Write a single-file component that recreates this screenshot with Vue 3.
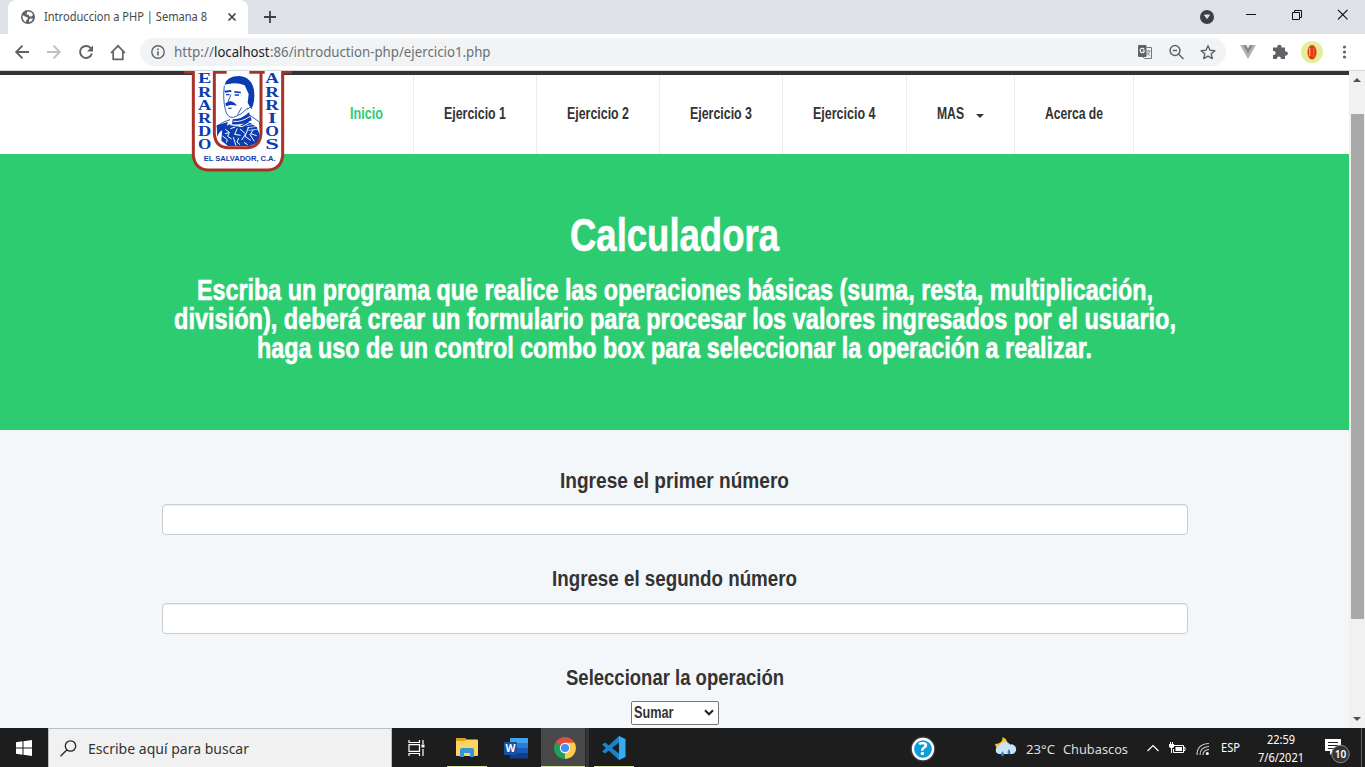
<script setup>
import { h, ref } from 'vue'

// Single line of real text, set to a fixed measure (condensed or expanded).
const Fit = (p) =>
  h('svg', { width: p.w, height: p.h || 20, class: 'fit' }, [
    h('text', { x: 0, y: p.b || 15, 'font-size': p.s || 14, textLength: p.w, lengthAdjust: 'spacingAndGlyphs', fill: 'currentColor' }, p.t)
  ])
Fit.props = ['t', 'w', 's', 'b', 'h']

const nav = [
  { t: 'Inicio', w: 33, on: true },
  { t: 'Ejercicio 1', w: 62 },
  { t: 'Ejercicio 2', w: 62 },
  { t: 'Ejercicio 3', w: 62 },
  { t: 'Ejercicio 4', w: 62.5 },
  { t: 'MAS', w: 27, caret: true },
  { t: 'Acerca de', w: 58 }
]
const lines = [
  { t: 'Escriba un programa que realice las operaciones básicas (suma, resta, multiplicación,', w: 956 },
  { t: 'división), deberá crear un formulario para procesar los valores ingresados por el usuario,', w: 1002 },
  { t: 'haga uso de un control combo box para seleccionar la operación a realizar.', w: 835 }
]
const leftLetters = ['E', 'R', 'A', 'R', 'D', 'O']
const rightLetters = ['A', 'R', 'R', 'I', 'O', 'S']
const first = ref('')
const second = ref('')
</script>

<template>
  <div class="screen">
    <header class="tabs">
      <div class="tab">
        <svg class="globe" width="14" height="14" viewBox="0 0 14 14"><circle cx="7" cy="7" r="7" fill="#5f6368"/><path d="M1.500 5.500Q3 5.300 4 6.500L6.500 7.300 6.800 9 5.200 10.200 5 12.200Q1.400 10.500 1.500 5.500ZM6.500 1.600Q10.500 1.500 12 4.700L10.800 6.400 8.300 6.300 7.600 4.700 5.600 4.600 5.800 3ZM9 8.500L12 8.700Q11 11.500 8.300 12.200L8 10Z" fill="#fff"/></svg>
        <Fit class="title" t="Introduccion a PHP | Semana 8" :w="163" :s="12.2" :b="14"/>
        <svg class="x" width="8" height="8" viewBox="0 0 8 8"><path d="M.5.5l7 7M7.5.5l-7 7" stroke="#3c4043" stroke-width="1.6"/></svg>
      </div>
      <svg class="plus" width="12" height="12" viewBox="0 0 12 12"><path d="M6 0v12M0 6h12" stroke="#3c4043" stroke-width="1.8"/></svg>
      <svg class="winctl" width="150" height="20" viewBox="0 0 150 20">
        <circle cx="8" cy="11" r="7" fill="#3c4043"/><path d="M5.500 9h5l-2.500 3.500Z" fill="#dee1e6" stroke="#dee1e6"/>
        <g fill="none" stroke="#111"><path d="M47 8.500h10M93.500 6.500h7v7h-7ZM95.500 6.500v-2h7v7h-2"/><path d="M139 3.800l9.500 9.500M148.500 3.800l-9.500 9.500" stroke-width="1.200"/></g>
      </svg>
    </header>

    <div class="toolbar">
      <svg class="navi" width="114" height="18" viewBox="0 0 114 18" fill="none" stroke="#5f6368" stroke-width="1.900">
        <path d="M15 9H2.500M8.500 2.700L2.200 9l6.300 6.300"/>
        <path d="M33 9h12M39.500 2.700L45.800 9l-6.300 6.300" stroke="#bdc1c6"/>
        <path d="M77 5.500A6 6 0 1 0 77.900 10.500"/><path d="M79 2.500v6h-6Z" fill="#5f6368" stroke="none"/>
        <path d="M97 10L104 2.800l7 7.200M99.200 8.500v7.900h9.600V8.500" stroke-width="1.700"/>
      </svg>
      <div class="omni">
        <svg width="14" height="14" viewBox="0 0 14 14"><circle cx="7" cy="7" r="6.200" fill="none" stroke="#5f6368" stroke-width="1.400"/><path d="M7 6.200v4.200M7 3.400v1.600" stroke="#5f6368" stroke-width="1.600"/></svg>
        <div class="url"><Fit t="http://" :w="40" :s="13.6"/><Fit class="host" t="localhost" :w="55.500" :s="13.6"/><Fit t=":86/introduction-php/ejercicio1.php" :w="220.500" :s="13.6"/></div>
        <svg class="acts" width="80" height="18" viewBox="0 0 80 18">
          <rect x="1" y="2" width="8.500" height="12" rx="1" fill="#5f6368"/><path d="M9.500 4.500h5v11H7.500L6 14" fill="none" stroke="#777"/>
          <path d="M7.300 6.500A2.200 2.200 0 1 0 7.500 8H5.500" fill="none" stroke="#fff" stroke-width="1.100"/><path d="M9.500 8h4M11.500 7v1M12.800 8q-.7 3-3 4.600M10 9.300q1.300 2.400 3.300 3.500" fill="none" stroke="#888" stroke-width=".9"/>
          <g fill="none" stroke="#5f6368" stroke-width="1.500"><circle cx="38" cy="7.500" r="4.900"/><path d="M41.500 11l5 5M35.800 7.500h4.400"/><path d="M71 2.700l2 4.500 4.900.4-3.700 3.200 1.100 4.800-4.300-2.500-4.300 2.500 1.100-4.800-3.700-3.200 4.900-.4Z" stroke-linejoin="round" stroke-width="1.400"/></g>
        </svg>
      </div>
      <svg class="exts" width="120" height="26" viewBox="0 0 120 26">
        <path d="M0 6h16L8 20Z" fill="#b4b4b4"/><path d="M3.200 6h9.600L8 14.500Z" fill="#858585"/><path d="M6 6h4L8 9.500Z" fill="#eee"/>
        <path d="M33 8.500h4.300a2.200 2.200 0 1 1 4.200 0H45v3.900a2.200 2.200 0 1 1 0 4.200v3.400h-4.200a2 2 0 1 0-3.800 0h-4v-4.200a2 2 0 1 0 0-3.800Z" fill="#5f6368"/>
        <circle cx="72" cy="13" r="11" fill="#e5ec9a"/><ellipse cx="72" cy="13.300" rx="4.500" ry="7.200" fill="#e33a12"/><path d="M69.800 9v8" stroke="#ffc9a0"/><path d="M73.700 9v9" stroke="#f9813e" stroke-width=".8"/>
        <g fill="#5f6368"><circle cx="104.500" cy="8" r="1.600"/><circle cx="104.500" cy="13" r="1.600"/><circle cx="104.500" cy="18" r="1.600"/></g>
      </svg>
    </div>

    <div class="viewport">
      <main class="page">
        <nav class="menu">
          <a v-for="n in nav" :key="n.t" :class="{ on: n.on }"><Fit class="cond" :t="n.t" :w="n.w" :s="17" :b="15"/><i v-if="n.caret" class="caret"></i></a>
          <svg class="crest" width="108" height="102" viewBox="42 15 324 306">
            <path d="M70 15H338V272Q334 311 296 312H112Q74 311 70 272Z" fill="#fff"/>
            <path d="M42 19H70V268Q74 309 114 312H294Q334 309 338 268V19H365M129 19H170M238 19H284" fill="none" stroke="#a93226" stroke-width="9"/>
            <g fill="#0b3db0">
              <path d="M164 56Q170 30 208 30Q245 34 252 72Q256 108 244 130L233 110 236 84 224 58Q198 46 164 56Z"/>
              <path d="M163 74l20-2 2 5-20 3zM193 75l19 2 1 5-20-2zM168 84h11v4h-11zM194 85h13v4h-13zM166 112l15-7 12 5 8 9q-11-3-20-2l-13 4zM174 125h12l-3 4-8-1z"/>
              <path d="M188 160q28 0 49-21l8 24q-30 16-59 12zM140 178l34-10-6 18q-22 9-26 27zM157 188l21-13 31 5 25-14 27 18 9 26-8 20-22 10h-66l-20-16z"/>
            </g>
            <path d="M163 59q-5 40 3 72 6 26 25 23 23-6 42-28M183 86l-10 24M234 107q14-8 7 16l-10 8M215 124l-12 22M140 181q16-13 40-20M240 148l28 20 3 24" fill="none" stroke="#0b3db0" stroke-width="2.500"/>
            <g fill="none" stroke="#fff" stroke-width="3">
              <path d="M190 166q25 3 50-15M180 176l36 6 34-19M166 190l12 9-5 12 12 8M202 187l-8 18 18 3M210 189l17 15-12 18M236 183l-11 28 17 12M250 191l-8 12 18 6M158 210l14 11-3 9M190 214l8 25M206 216l-5 12 9 8M239 204l14 22M181 188l15-5M165 203l12-3M222 229l11 7"/><path d="M229 179l34-6M231 186l34-6M235 193l33-4" stroke-width="2"/>
            </g>
            <path d="M133 19V203Q136 244 173 245H233Q270 243 273 203V19" fill="none" stroke="#a93226" stroke-width="9"/>
            <g class="crest-letters" fill="#0b3db0">
              <text v-for="(c, i) in leftLetters" :key="'l' + i" x="84" :y="52 + i * 39.500" textLength="40" lengthAdjust="spacingAndGlyphs">{{ c }}</text>
              <text v-for="(c, i) in rightLetters" :key="'r' + i" :x="c === 'I' ? 294 : 286" :y="52 + i * 39.500" :textLength="c === 'I' ? 25 : 41" lengthAdjust="spacingAndGlyphs">{{ c }}</text>
              <text class="country" x="101" y="284" textLength="216" lengthAdjust="spacingAndGlyphs">EL SALVADOR, C.A.</text>
            </g>
          </svg>
        </nav>

        <section class="hero">
          <h1><Fit class="cond" t="Calculadora" :w="209" :s="47" :b="42" :h="50"/></h1>
          <p><Fit v-for="l in lines" :key="l.w" class="cond" :t="l.t" :w="l.w" :s="28.6" :b="24" :h="29"/></p>
        </section>

        <form class="form" @submit.prevent>
          <label><Fit class="cond" t="Ingrese el primer número" :w="229" :s="21.5" :b="20" :h="26"/></label>
          <input v-model="first" type="text">
          <label><Fit class="cond" t="Ingrese el segundo número" :w="245" :s="21.5" :b="19" :h="26"/></label>
          <input v-model="second" type="text">
          <label><Fit class="cond" t="Seleccionar la operación" :w="218" :s="21.5" :b="19" :h="26"/></label>
          <div class="select"><Fit class="cond" t="Sumar" :w="39.500" :s="16.5" :b="15"/><svg width="10" height="7" viewBox="0 0 10 7"><path d="M1 1.300l4 4 4-4" fill="none" stroke="#222" stroke-width="2"/></svg></div>
        </form>
      </main>
      <div class="scroll">
        <i class="up"></i><div class="thumb"></div><i class="down"></i>
      </div>
    </div>

    <footer class="taskbar">
      <div class="start"><svg width="16" height="16" viewBox="0 0 16 16" fill="#fff"><path d="M0 2.200L6.500 1.300V7.500H0ZM7.500 1.200L16 0V7.500H7.500ZM0 8.500H6.500V14.700L0 13.800ZM7.500 8.500H16V16L7.500 14.800Z"/></svg></div>
      <div class="search">
        <svg width="17" height="17" viewBox="0 0 17 17" fill="none" stroke="#222" stroke-width="1.300"><circle cx="10.500" cy="6" r="5.200"/><path d="M7 9.800L.5 16.300"/></svg>
        <Fit t="Escribe aquí para buscar" :w="161" :s="14.6" :b="16"/>
      </div>
      <div class="app task"><svg width="18" height="16" viewBox="0 0 18 16" fill="none" stroke="#fff" stroke-width="1.200"><path d="M1 0v2.500h10.500V0M1 16v-2.500h10.500V16M1 4.700h10.500v6.600H1ZM15 0v4M15 9v7"/><path d="M13.500 4.500h3v3h-3Z" fill="#fff" stroke="none"/></svg></div>
      <div class="app folder run"><svg width="22" height="19" viewBox="0 0 22 19"><path d="M0 1q0-1 1-1h8l1.500 1.500H21q1 0 1 1V17q0 1-1 1H1q-1 0-1-1Z" fill="#fcd462"/><path d="M0 1q0-1 1-1h8l1 1.500L8.500 3H0Z" fill="#e1a01b"/><path d="M4 19v-7q0-2 2-2h10q2 0 2 2v7h-4v-4H8v4Z" fill="#3993d8"/></svg></div>
      <div class="app word"><svg width="24" height="22" viewBox="0 0 24 22"><path d="M6 1h18v5H6Z" fill="#41a5ee"/><path d="M6 6h18v5H6Z" fill="#2b7cd3"/><path d="M6 11h18v5H6Z" fill="#185abd"/><path d="M6 16h18v5.500H6Z" fill="#123f8c"/><path d="M0 5h13v13H0Z" fill="#17509f"/><text x="1.500" y="15" font-size="10" font-weight="700" textLength="10" lengthAdjust="spacingAndGlyphs" fill="#fff">W</text></svg></div>
      <div class="app chrome run"><svg width="22" height="22" viewBox="0 0 22 22"><path d="M11 11L1.500 5.500A11 11 0 0 1 20.500 5.500Z" fill="#dd4f43"/><path d="M11 11L20.500 5.500A11 11 0 0 1 11 22Z" fill="#fccd48"/><path d="M11 11V22A11 11 0 0 1 1.500 5.500Z" fill="#1fa15d"/><path d="M11 5.800h9.700l-4.500 8L11 22l4-8.500Z" fill="#fccd48"/><circle cx="11" cy="11" r="5.200" fill="#fff"/><circle cx="11" cy="11" r="4.100" fill="#4c8bf5"/></svg></div>
      <div class="stack"></div>
      <div class="app code run"><svg width="24" height="24" viewBox="0 0 24 24"><path d="M17 0v6.500L3 17.500 0 15.500 16 1Z" fill="#1684ce"/><path d="M17 24v-6.500L3 6.500 0 8.500 16 23Z" fill="#1684ce"/><path d="M17 0l6.500 3v18L17 24Z" fill="#35acf2"/></svg></div>
      <svg class="help" width="24" height="24" viewBox="0 0 24 24"><circle cx="12" cy="12" r="10" fill="#0d9bdb" stroke="#fff" stroke-width="2.300"/><text x="7.500" y="18" font-size="17" font-weight="700" textLength="9" lengthAdjust="spacingAndGlyphs" fill="#fff">?</text></svg>
      <svg class="weather" width="24" height="24" viewBox="0 0 24 24"><path d="M8.500 1q7 3 4 10H2L1 8q8 0 7.500-7Z" fill="#f9c52b"/><path d="M6 18a4 4 0 0 1-.5-8 6 6 0 0 1 10.500-1.500 4.500 4.500 0 0 1 2.500 9.500Z" fill="#c9e4fa"/><path d="M8.500 15q-2.800 4.500 0 5.500 2.800-1 0-5.500M15 13q-2.800 4.500 0 5.500 2.800-1 0-5.500" fill="#2e79c8"/></svg>
      <Fit class="deg" t="23°C" :w="29" :s="13" :b="15.500"/>
      <Fit class="rain" t="Chubascos" :w="65" :s="13" :b="15.500"/>
      <svg class="chev" width="12" height="8" viewBox="0 0 12 8"><path d="M.5 7L6 1.500 11.500 7" fill="none" stroke="#fff" stroke-width="1.200"/></svg>
      <svg class="batt" width="16" height="12" viewBox="0 0 16 12"><path d="M4.500 3.500h10v7h-10V7M14.500 5.500H16v3h-1.500" fill="none" stroke="#fff"/><path d="M6.500 5h6.500v4H6.500ZM0 2h5v3q-.5 1-2 1v5H2V6Q0 6 0 4Z" fill="#fff"/><path d="M1.500 0v2M3.500 0v2" stroke="#fff"/></svg>
      <svg class="wifi" width="14" height="14" viewBox="0 0 14 14" fill="none" stroke="#ccc" stroke-width="1.100"><path d="M1 13Q1 2 13 1.500M4 13Q4 5 13 4.500M7 13Q7 8 13 7.500"/><circle cx="11.300" cy="11.500" r="1.500" fill="#fff" stroke="none"/></svg>
      <Fit class="esp" t="ESP" :w="19" :s="12" :b="14"/>
      <div class="clock"><Fit t="22:59" :w="28" :s="12" :b="13.500" :h="18"/><Fit t="7/6/2021" :w="46" :s="12" :b="14" :h="18"/></div>
      <svg class="note" width="26" height="26" viewBox="0 0 26 26"><path d="M0 1h16v12H9l-4 4v-4H0Z" fill="#fff"/><path d="M3 4.500h10M3 7.500h10M3 10.500h6" stroke="#222"/><circle cx="15.500" cy="16" r="8.700" fill="#343434" stroke="#8a8a8a"/><text x="9.800" y="20" font-size="11" font-weight="600" textLength="11.500" lengthAdjust="spacingAndGlyphs" fill="#fff">10</text></svg>
      <div class="peek"></div>
    </footer>
  </div>
</template>

<style>
html, body { margin: 0; overflow: hidden; }
svg { display: block; flex: none; overflow: visible; }
.hero .fit text { stroke: currentColor; stroke-width: .6px; }
</style>

<style scoped>
.screen { width: 1365px; height: 767px; display: flex; flex-direction: column; font-family: "Noto Sans", "Open Sans", sans-serif; overflow: hidden; background: #fff; }
.cond { font-family: "Liberation Sans", Arial, sans-serif; font-weight: 700; }

.tabs { height: 34px; flex: none; background: #dee1e6; display: flex; align-items: flex-start; }
.tab { margin-left: 8px; width: 240px; height: 34px; background: #fff; border-radius: 8px 8px 0 0; display: flex; align-items: center; box-sizing: border-box; padding-left: 13px; }
.title { margin-left: 9px; color: #45494d; }
.x { margin-left: 21px; }
.plus { margin: 11px 0 0 16px; }
.winctl { margin: 6px 16px 0 auto; }

.toolbar { height: 36px; flex: none; display: flex; align-items: center; border-bottom: 1px solid #d5d8dc; background: #fff; }
.navi { margin-left: 14px; }
.omni { margin-left: 12px; width: 1086px; height: 28px; border-radius: 14px; background: #f1f3f4; display: flex; align-items: center; box-sizing: border-box; padding-left: 11px; }
.url { display: flex; margin-left: 9px; color: #6b7075; }
.host { color: #202124; }
.acts { margin-left: auto; margin-right: 9px; }
.exts { margin-left: 14px; }

.viewport { height: 657px; flex: none; display: flex; overflow: hidden; }
.page { width: 1349px; height: 657px; background: #f3f7fa; overflow: hidden; }
.menu { position: relative; height: 83px; box-sizing: border-box; border-top: 4px solid #333533; background: #fff; display: flex; padding-left: 320px; }
.menu a { display: flex; align-items: flex-start; box-sizing: border-box; height: 79px; padding: 29px 30px 0; border-right: 1px solid #eee; color: #333; }
.menu a.on { color: #2ecc71; }
.caret { margin: 10px 0 0 12px; border: 4px solid transparent; border-top-color: #333; border-bottom: 0; width: 0; height: 0; }
.crest { position: absolute; left: 184px; top: -4px; }
.crest-letters { font: 700 45px "Liberation Serif", serif; }
.country { font: 700 19px "Liberation Sans", sans-serif; }

.hero { height: 276px; background: #2ecc71; color: #fff; display: flex; flex-direction: column; align-items: center; box-sizing: border-box; padding-top: 55px; }
.hero h1, .hero p { margin: 0; }
.hero p { margin-top: 17px; display: flex; flex-direction: column; align-items: center; }

.form { display: flex; flex-direction: column; align-items: center; color: #333; padding-top: 38px; }
.form label { height: 36px; }
.form input { width: 1026px; height: 31px; box-sizing: border-box; margin: 0 0 32px; border: 1px solid #ccc; border-radius: 4px; background: #fff; box-shadow: inset 0 1px 1px rgba(0, 0, 0, .075); }
.form input + label { height: 35px; }
.form input + label + input { margin-top: 0.500px; }
.select { width: 88px; height: 24px; box-sizing: border-box; border: 1px solid #767676; border-radius: 2px; background: #fff; display: flex; align-items: center; justify-content: space-between; padding: 0 4px 0 2px; color: #333; }

.scroll { width: 16px; background: #f1f1f1; display: flex; flex-direction: column; align-items: center; }
.scroll i { border: 4px solid transparent; width: 0; height: 0; }
.up { border-top: 0 !important; border-bottom-color: #505050 !important; margin-top: 7px; }
.thumb { width: 13px; height: 505px; margin-top: 32px; background: #a8a8a8; }
.down { border-bottom: 0 !important; border-top-color: #505050 !important; margin-top: 98px; }

.taskbar { height: 39px; flex: none; background: #1d1d1d; display: flex; align-items: center; color: #fff; }
.start { width: 48px; display: flex; justify-content: center; }
.search { width: 344px; height: 39px; box-sizing: border-box; background: #f1f1f1; border: 1px solid #bdbdbd; border-bottom: 0; display: flex; align-items: center; gap: 11px; padding-left: 11px; color: #333; }
.app { height: 39px; display: flex; align-items: center; justify-content: center; position: relative; }
.task { width: 49px; }
.folder { width: 52px; }
.word { width: 48px; padding-right: 2px; box-sizing: border-box; }
.chrome { width: 44px; background: #484848; box-sizing: border-box; padding-left: 4px; }
.stack { width: 4px; height: 39px; background: #343434; border-left: 1px solid #292929; box-sizing: border-box; }
.code { width: 50px; }
.run::after { content: ""; position: absolute; bottom: 0; left: 50%; width: 40px; margin-left: -20px; height: 1px; background: #d4e8a4; }
.chrome::after { width: 44px; margin-left: -22px; }
.help { margin: 2px 0 0 272px; filter: drop-shadow(0 0 1px #888); }
.weather { margin-left: 59px; }
.deg, .rain { margin-left: 8px; color: #ddd; }
.chev { margin-left: 19px; }
.batt { margin-left: 10px; }
.wifi { margin: 3px 0 0 11px; }
.esp { margin-left: 11px; }
.clock { margin-left: 18px; width: 46px; display: flex; flex-direction: column; align-items: center; }
.note { margin: 7px 0 0 21px; }
.peek { width: 1px; height: 39px; margin-left: 10px; background: #606060; }
</style>
